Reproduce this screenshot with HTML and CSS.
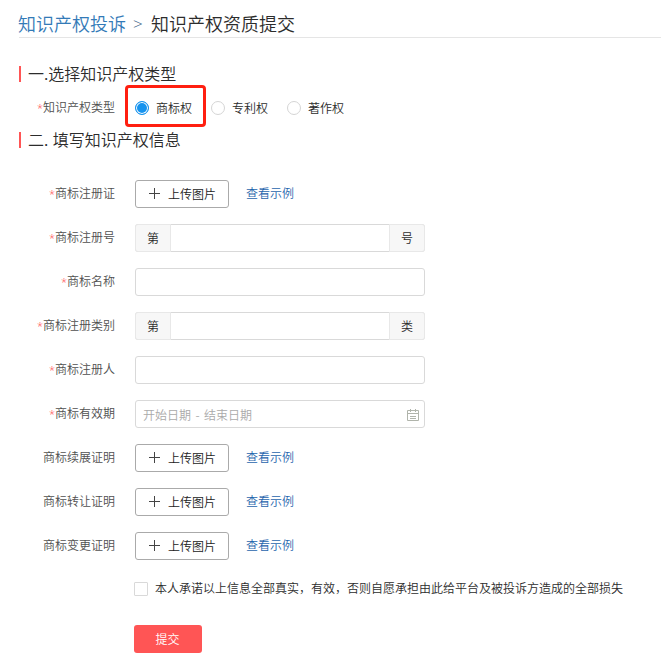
FILE: index.html
```html
<!DOCTYPE html>
<html lang="zh-CN">
<head>
<meta charset="utf-8">
<title>知识产权资质提交</title>
<link rel="stylesheet" href="styles.css">
</head>
<body>
<header class="crumbs"><a class="crumb-link">知识产权投诉</a><span class="crumb-sep">&gt;</span><span>知识产权资质提交</span></header>
<main>
<h2 class="section-title">一.选择知识产权类型</h2>
<div class="row type-row">
  <label class="label"><i class="req">*</i>知识产权类型</label>
  <div class="radios">
    <span class="radio picked"><i class="dot on"></i>商标权</span>
    <span class="radio"><i class="dot"></i>专利权</span>
    <span class="radio"><i class="dot"></i>著作权</span>
  </div>
</div>
<h2 class="section-title">二. 填写知识产权信息</h2>
<div class="form">
  <div class="row"><label class="label"><i class="req">*</i>商标注册证</label><button class="upload"><svg class="plus" viewBox="0 0 11 11"><path d="M0 5.5H11M5.5 0V11"/></svg>上传图片</button><a class="example">查看示例</a></div>
  <div class="row"><label class="label"><i class="req">*</i>商标注册号</label><div class="field"><span class="addon first">第</span><span class="space"></span><span class="addon last">号</span></div></div>
  <div class="row"><label class="label"><i class="req">*</i>商标名称</label><div class="field"></div></div>
  <div class="row"><label class="label"><i class="req">*</i>商标注册类别</label><div class="field"><span class="addon first">第</span><span class="space"></span><span class="addon last">类</span></div></div>
  <div class="row"><label class="label"><i class="req">*</i>商标注册人</label><div class="field"></div></div>
  <div class="row"><label class="label"><i class="req">*</i>商标有效期</label><div class="field date"><span>开始日期<span class="dash">-</span>结束日期</span><svg class="calendar" viewBox="0 0 12 12"><path d="M.5 1.5H11.5V11.5H.5ZM.5 4.5H11.5M3.5 0V3M8.5 0V3M3 7.5H9M3 9.5H9"/></svg></div></div>
  <div class="row"><label class="label">商标续展证明</label><button class="upload"><svg class="plus" viewBox="0 0 11 11"><path d="M0 5.5H11M5.5 0V11"/></svg>上传图片</button><a class="example">查看示例</a></div>
  <div class="row"><label class="label">商标转让证明</label><button class="upload"><svg class="plus" viewBox="0 0 11 11"><path d="M0 5.5H11M5.5 0V11"/></svg>上传图片</button><a class="example">查看示例</a></div>
  <div class="row"><label class="label">商标变更证明</label><button class="upload"><svg class="plus" viewBox="0 0 11 11"><path d="M0 5.5H11M5.5 0V11"/></svg>上传图片</button><a class="example">查看示例</a></div>
</div>
<div class="agree"><i class="check"></i><span>本人承诺以上信息全部真实，有效，否则自愿承担由此给平台及被投诉方造成的全部损失</span></div>
<button class="submit">提交</button>
</main>
</body>
</html>
```
FILE: styles.css
```css
* { box-sizing: border-box; }
body {
  margin: 0;
  background: #fff;
  color: #2c2c2c;
  font: 350 12px/18px "Noto Sans CJK SC", sans-serif;
}
i { font-style: normal; }
button { font: inherit; }
.crumbs {
  display: flex;
  height: 38px;
  margin-left: 19px;
  padding-top: 10px;
  border-bottom: 1px solid #e5e5e5;
  font-size: 18px;
  line-height: 26px;
  text-indent: -1px;
}
.crumb-link { color: #337ab7; }
.crumb-sep {
  width: 26px;
  padding-left: 8px;
  font-family: "Open Sans", sans-serif;
  font-size: 17px;
  line-height: 28px;
  color: #3f6488;
}
main { padding-top: 28px; }
.section-title {
  height: 16px;
  margin: 0 0 0 19px;
  padding-left: 7px;
  border-left: 2px solid #ff5555;
  font-size: 16px;
  font-weight: 350;
  line-height: 15px;
  word-spacing: 1px;
}
.row { display: flex; align-items: center; height: 28px; }
.label {
  width: 115px;
  height: 18px;
  margin: 0 20px 2px 0;
  text-align: right;
  color: #505050;
}
.req {
  color: #ff3d3d;
  font-family: "Open Sans", sans-serif;
  font-size: 11px;
  line-height: 1;
}
.type-row { height: 50px; }
.type-row .label { margin-right: 10px; margin-bottom: 0; }
.radios { display: flex; align-items: center; margin-top: -2px; }
.radio { display: flex; align-items: center; width: 76px; height: 42px; padding-top: 4px; }
.picked {
  width: 81px;
  margin-right: 5px;
  padding: 4px 0 0 7px;
  border: 3px solid #ff1f10;
  border-radius: 4px;
}
.dot {
  width: 14px;
  height: 14px;
  margin-right: 7px;
  border: 1px solid #d5d5d5;
  border-radius: 50%;
}
.dot.on {
  border-color: #1693ee;
  background: #1693ee;
  box-shadow: inset 0 0 0 1px #fff;
}
.form { display: grid; gap: 16px; margin-top: 32px; }
.upload {
  display: flex;
  align-items: center;
  width: 94px;
  height: 28px;
  padding: 0 0 0 13px;
  border: 1px solid #aaa;
  border-radius: 3px;
  background: #fff;
  color: #222;
}
.plus {
  width: 11px;
  height: 11px;
  margin: 0 8px 1px 0;
  fill: none;
  stroke: #444;
}
.example { margin: 0 0 2px 17px; color: #1f65ad; }
.field {
  display: flex;
  width: 290px;
  height: 28px;
  border: 1px solid #d9d9d9;
  border-radius: 3px;
}
.addon {
  width: 34px;
  background: #f7f7f7;
  box-shadow: 0 0 0 1px #e8e8e8;
  line-height: 26px;
  text-align: center;
}
.first { border-radius: 2px 0 0 2px; }
.last { border-radius: 0 2px 2px 0; }
.space { flex: 1; }
.date {
  align-items: center;
  justify-content: space-between;
  padding: 1px 5px 0 7px;
  color: #aaa;
}
.dash { display: inline-block; width: 13px; text-align: center; }
.calendar { width: 12px; height: 12px; fill: none; stroke: #b0b4ab; }
.agree { display: flex; align-items: center; height: 18px; margin: 20px 0 0 134px; }
.agree span { margin-top: -2px; }
.check {
  width: 14px;
  height: 14px;
  margin-right: 7px;
  border: 1px solid #d9d9d9;
  border-radius: 1px;
}
.submit {
  display: block;
  width: 68px;
  height: 28px;
  margin: 27px 0 0 134px;
  padding: 0 1px 0 0;
  border: 0;
  border-radius: 3px;
  background: #ff5555;
  color: #fff;
}
```
